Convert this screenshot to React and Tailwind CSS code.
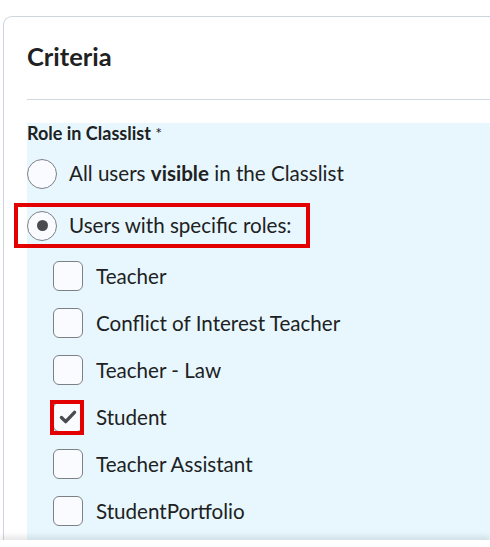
import React from "react";

const font = { fontFamily: "Lato, 'Noto Sans', sans-serif" };

function Radio({ checked }) {
  return (
    <div className="w-[30px] h-[30px] rounded-full border border-[#7c8186] bg-[#f9fbff] flex items-center justify-center shrink-0">
      {checked && <div className="w-[11px] h-[11px] rounded-full bg-[#494c4e]" />}
    </div>
  );
}

function Checkbox({ checked }) {
  return (
    <div className="w-[30px] h-[30px] rounded-[6px] border border-[#7c8186] bg-[#f9fbff] flex items-center justify-center shrink-0">
      {checked && (
        <svg width="30" height="30" viewBox="0 0 30 30">
          <path d="M8 15.5 L12.5 20 L22 10" fill="none" stroke="#494c4e" strokeWidth="3.6" strokeLinecap="round" strokeLinejoin="round" />
        </svg>
      )}
    </div>
  );
}

const roles = ["Teacher", "Conflict of Interest Teacher", "Teacher - Law", "Student", "Teacher Assistant", "StudentPortfolio"];

export default function App() {
  return (
    <div className="relative w-[490px] h-[547px] overflow-hidden bg-white text-[#202122]" style={font}>
      <div className="pt-[16px] pl-[3px]">
        <div className="w-[540px] border-l border-t border-[#cdd5dc] rounded-tl-[9px] pl-[23px] pt-[24px]">
          <h2 className="text-[25.5px] font-bold leading-[1.2]">Criteria</h2>
          <div className="mt-[27px] h-px bg-[#d3d9e3]" />
          <div className="mt-[23px] bg-[#e8f7fe] pb-[40px]">
            <div className="text-[18px] leading-[20px] font-bold">
              Role in Classlist <span className="font-normal text-[16px] align-top">*</span>
            </div>
            <div className="mt-[9px] flex flex-col">
              <div className="h-[44px] flex items-center gap-[12px] text-[20.6px]">
                <Radio />
                <span>All users <b>visible</b> in the Classlist</span>
              </div>
              <div className="relative mt-[8px] h-[44px] flex items-center gap-[12px] text-[20.6px]">
                <Radio checked />
                <span>Users with specific roles:</span>
                <div className="absolute left-[-13px] top-[-1px] w-[296px] h-[45px] border-[4px] border-[#e30000]" />
              </div>
            </div>
            <div className="mt-[5px] flex flex-col pl-[26px]">
              {roles.map((r) => (
                <div key={r} className="relative h-[47px] flex items-center gap-[13px] text-[20.6px]">
                  <Checkbox checked={r === "Student"} />
                  <span>{r}</span>
                  {r === "Student" && (
                    <div className="absolute left-[-3px] top-[6px] w-[34px] h-[35px] border-[4px] border-[#e30000]" />
                  )}
                </div>
              ))}
            </div>
          </div>
        </div>
      </div>
      <div className="absolute left-0 right-0 bottom-0 h-[7px] bg-white shadow-[0_-3px_6px_rgba(0,0,0,0.12)]" />
    </div>
  );
}
